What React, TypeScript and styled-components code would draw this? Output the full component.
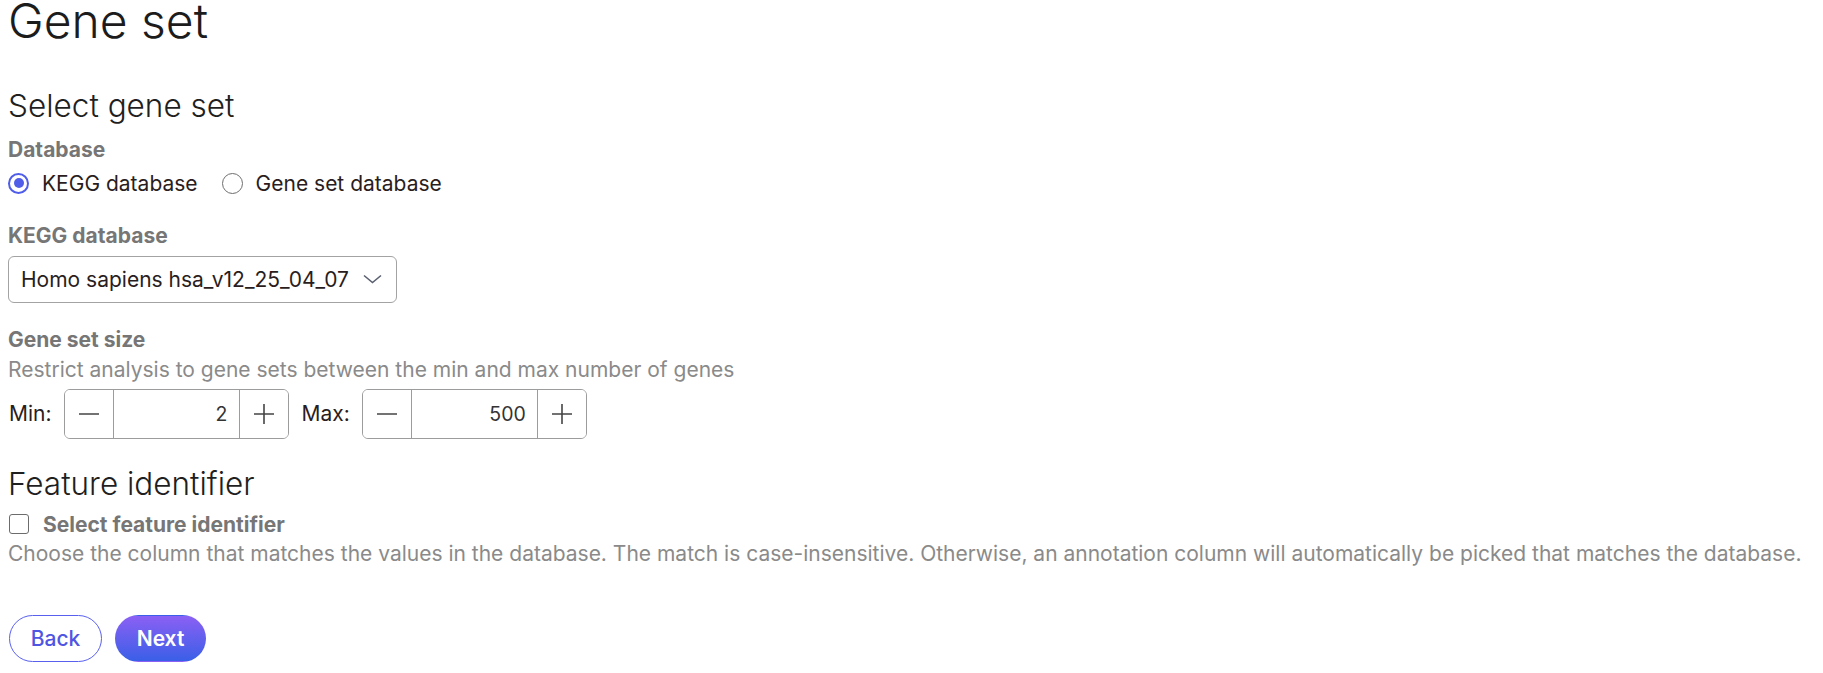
import React from "react";
import styled, { createGlobalStyle } from "styled-components";

const GlobalStyle = createGlobalStyle`
  *, *::before, *::after { box-sizing: border-box; }
  html, body { margin: 0; padding: 0; background: #ffffff; }
  body {
    font-family: Inter, "Noto Sans", "Liberation Sans", sans-serif;
    font-size: 21px;
    color: #231f20;
  }
`;

const Page = styled.div`
  display: flex;
  flex-direction: column;
  align-items: flex-start;
  padding: 0 8px;
`;

const Title = styled.h1`
  margin: 0;
  font-size: 48px;
  font-weight: 300;
  line-height: 41px;
  color: #1c1c1c;
`;

const SectionTitle = styled.h2<{ $mt: number }>`
  margin: ${(p) => p.$mt}px 0 0;
  font-size: 31.5px;
  font-weight: 300;
  line-height: 37.8px;
  color: #1f1f1f;
`;

const FieldLabel = styled.div<{ $mt: number }>`
  margin-top: ${(p) => p.$mt}px;
  font-size: 21px;
  font-weight: 700;
  line-height: 29.4px;
  color: #767676;
`;

const Description = styled.div<{ $mt: number }>`
  margin-top: ${(p) => p.$mt}px;
  font-size: 21px;
  line-height: 29.4px;
  color: #8a8a8a;
`;

const RadioGroup = styled.div`
  margin-top: 4.6px;
  display: flex;
  align-items: center;
  gap: 24px;
  height: 29.4px;
`;

const RadioItem = styled.label`
  display: flex;
  align-items: center;
  gap: 13px;
  line-height: 29.4px;
  color: #2a1d1d;
  cursor: pointer;
`;

const RadioCircle = styled.span<{ $checked: boolean }>`
  width: 21px;
  height: 21px;
  border-radius: 50%;
  border-style: solid;
  border-color: ${(p) => (p.$checked ? "#4f5de8" : "#6e6e6e")};
  border-width: ${(p) => (p.$checked ? "2px" : "1.5px")};
  display: flex;
  align-items: center;
  justify-content: center;
  flex: none;
  &::after {
    content: "";
    width: 10px;
    height: 10px;
    border-radius: 50%;
    background: #4f5de8;
    display: ${(p) => (p.$checked ? "block" : "none")};
  }
`;

const SelectBox = styled.div`
  margin-top: 5.9px;
  width: 389px;
  height: 47px;
  border: 1px solid #a3a3a3;
  border-radius: 6px;
  display: flex;
  align-items: center;
  justify-content: space-between;
  padding: 0 14px 0 12px;
  color: #2a1d1d;
  font-size: 21px;
`;

const StepperRow = styled.div`
  margin-top: 4.9px;
  display: flex;
  align-items: center;
  gap: 12px;
`;

const StepperLabel = styled.span`
  color: #2a1d1d;
  font-size: 21px;
  margin-left: 1px;
`;

const Stepper = styled.div`
  display: flex;
  height: 50px;
  width: 225px;
  border: 1px solid #9c9c9c;
  border-radius: 6px;
  overflow: hidden;
`;

const StepButton = styled.button`
  width: 48px;
  flex: none;
  border: none;
  background: #ffffff;
  display: flex;
  align-items: center;
  justify-content: center;
  padding: 0;
  color: #444;
`;

const StepValue = styled.div`
  flex: 1;
  border-left: 1px solid #9c9c9c;
  border-right: 1px solid #9c9c9c;
  display: flex;
  align-items: center;
  justify-content: flex-end;
  padding-right: 11px;
  color: #333;
  font-size: 19.5px;
`;

const CheckboxRow = styled.label`
  margin-top: 7.3px;
  display: flex;
  align-items: center;
  gap: 14px;
  height: 29.4px;
  font-weight: 700;
  color: #767676;
`;

const CheckBox = styled.span`
  width: 20px;
  height: 20px;
  border: 1.5px solid #6c6c6c;
  border-radius: 3px;
  flex: none;
  margin-left: 1px;
`;

const ButtonRow = styled.div`
  margin-top: 46.5px;
  display: flex;
  gap: 13px;
  padding-left: 1px;
`;

const PillButton = styled.button<{ $primary?: boolean }>`
  height: 47px;
  width: ${(p) => (p.$primary ? "91px" : "93px")};
  padding: 0;
  border-radius: 24px;
  font-family: Inter, "Noto Sans", sans-serif;
  font-size: 21px;
  font-weight: ${(p) => (p.$primary ? 600 : 500)};
  border: 1px solid ${(p) => (p.$primary ? "transparent" : "#5a60ee")};
  color: ${(p) => (p.$primary ? "#ffffff" : "#4f55e3")};
  background: ${(p) =>
    p.$primary ? "linear-gradient(180deg, #8b60f4 0%, #3a5fe7 100%)" : "#ffffff"};
`;

const Minus = () => (
  <svg width="20" height="20" viewBox="0 0 20 20">
    <path d="M0 10H20" stroke="#444" strokeWidth="1.6" />
  </svg>
);

const Plus = () => (
  <svg width="20" height="20" viewBox="0 0 20 20">
    <path d="M0 10H20M10 0V20" stroke="#444" strokeWidth="1.6" />
  </svg>
);

const Chevron = () => (
  <svg width="19" height="10" viewBox="0 0 19 10">
    <path d="M1 1.5L9.5 8.5L18 1.5" fill="none" stroke="#5a6070" strokeWidth="1.6" />
  </svg>
);

const NumberStepper = ({ value }: { value: number }) => (
  <Stepper>
    <StepButton aria-label="decrease">
      <Minus />
    </StepButton>
    <StepValue>{value}</StepValue>
    <StepButton aria-label="increase">
      <Plus />
    </StepButton>
  </Stepper>
);

export default function App() {
  return (
    <>
      <GlobalStyle />
      <Page>
        <Title>Gene set</Title>
        <SectionTitle $mt={45.6}>Select gene set</SectionTitle>
        <FieldLabel $mt={10.3}>Database</FieldLabel>
        <RadioGroup>
          <RadioItem>
            <RadioCircle $checked />
            KEGG database
          </RadioItem>
          <RadioItem>
            <RadioCircle $checked={false} />
            Gene set database
          </RadioItem>
        </RadioGroup>
        <FieldLabel $mt={22.6}>KEGG database</FieldLabel>
        <SelectBox>
          <span>Homo sapiens hsa_v12_25_04_07</span>
          <Chevron />
        </SelectBox>
        <FieldLabel $mt={21.7}>Gene set size</FieldLabel>
        <Description $mt={0.6}>
          Restrict analysis to gene sets between the min and max number of genes
        </Description>
        <StepperRow>
          <StepperLabel>Min:</StepperLabel>
          <NumberStepper value={2} />
          <StepperLabel>Max:</StepperLabel>
          <NumberStepper value={500} />
        </StepperRow>
        <SectionTitle $mt={25.6}>Feature identifier</SectionTitle>
        <CheckboxRow>
          <CheckBox />
          Select feature identifier
        </CheckboxRow>
        <Description $mt={0}>
          Choose the column that matches the values in the database. The match is
          case-insensitive. Otherwise, an annotation column will automatically be
          picked that matches the database.
        </Description>
        <ButtonRow>
          <PillButton>Back</PillButton>
          <PillButton $primary>Next</PillButton>
        </ButtonRow>
      </Page>
    </>
  );
}
